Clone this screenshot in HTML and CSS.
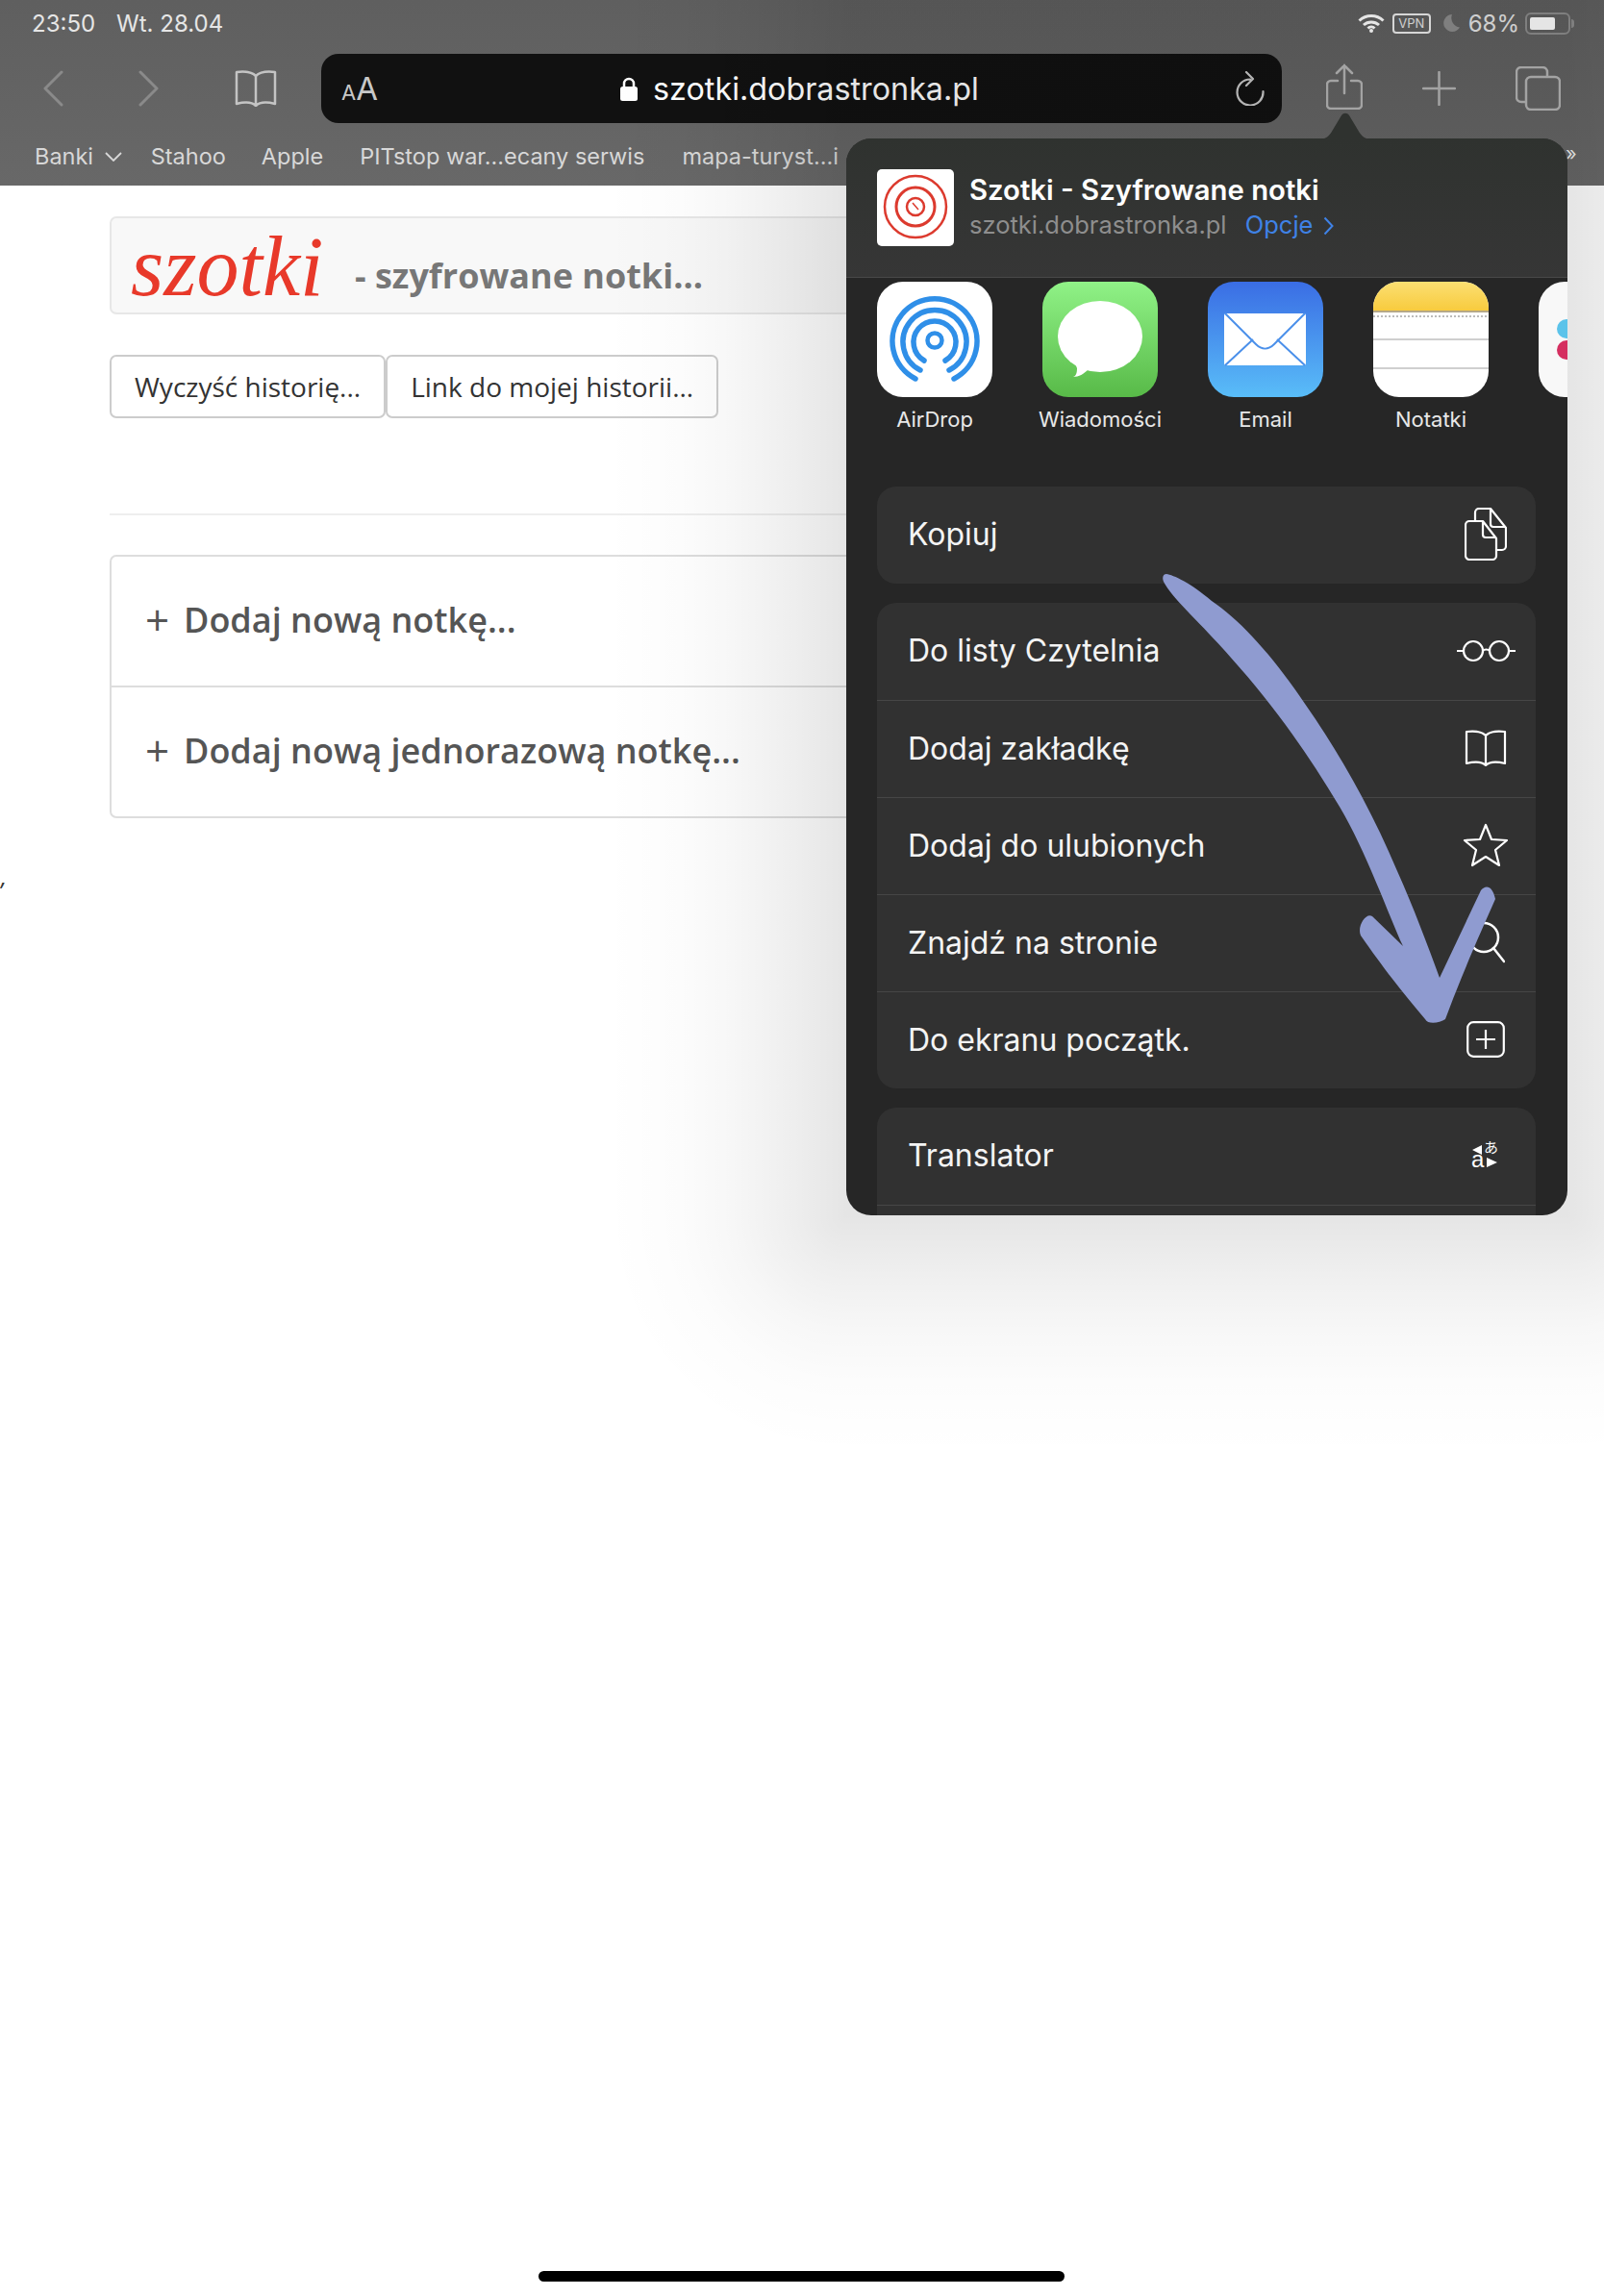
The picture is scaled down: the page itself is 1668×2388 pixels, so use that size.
FILE: index.html
```html
<!DOCTYPE html>
<html lang="pl">
<head>
   <meta charset="UTF-8">
   <meta name="viewport" content="width=device-width, initial-scale=1.0">
   <title>Szotki - Szyfrowane notki</title>
   <link rel="stylesheet" href="styles.css">
</head>
<body>
   <!-- Safari top bar, dimmed behind the share sheet -->
   <header class="topbar">
       <div class="status">
           <span class="status-time">23:50</span>
           <span class="status-date">Wt. 28.04</span>
           <span class="status-right">
               <svg class="wifi" viewBox="0 0 28 20"><path d="M1.5 7.5A18 18 0 0 1 26.500 7.500M6 12a12 12 0 0 1 16 0M10.500 15.500a5 5 0 0 1 7 0" fill="none" stroke="#fff" stroke-width="3"/><circle cx="14" cy="18" r="2" fill="#fff"/></svg>
               <span class="vpn">VPN</span>
               <svg class="moon" viewBox="0 0 20 18"><path d="M12 0A9 9 0 1 0 20 13.500 10 10 0 0 1 12 0Z" fill="#8d8d8d"/></svg>
               <span class="percent">68%</span>
               <span class="battery"><span class="battery-fill"></span></span>
               <span class="battery-nub"></span>
           </span>
       </div>

       <div class="toolbar">
           <svg class="tool back" viewBox="0 0 22 38"><path d="M20 2 3 19l17 17" fill="none" stroke="#8a8a8a" stroke-width="3" stroke-linecap="round" stroke-linejoin="round"/></svg>
           <svg class="tool forward" viewBox="0 0 22 38"><path d="M2 2l17 17L2 36" fill="none" stroke="#8a8a8a" stroke-width="3" stroke-linecap="round" stroke-linejoin="round"/></svg>
           <svg class="tool book" viewBox="0 0 44 38"><path d="M22 6C18 2 10 1 2 2V35C10 33 18 33 22 37 26 33 34 33 42 35V2C34 1 26 2 22 6ZM22 6V37" fill="none" stroke="#c4c4c4" stroke-width="2.500" stroke-linejoin="round"/></svg>
           <div class="urlbar">
               <span class="aa"><small>A</small>A</span>
               <span class="url">
                   <svg class="lock" viewBox="0 0 18 25"><path d="M4 11V7a5 5 0 0 1 10 0v4" fill="none" stroke="#fff" stroke-width="2.500"/><rect y="10" width="18" height="15" rx="2.500" fill="#fff"/></svg>
                   szotki.dobrastronka.pl
               </span>
               <svg class="reload" viewBox="0 0 32 36"><path d="M29.500 21A13.500 13.500 0 1 1 16 8.500M12 1l7 7-7 7" fill="none" stroke="#c8c8c8" stroke-width="2.200" stroke-linecap="round" stroke-linejoin="round"/></svg>
           </div>
           <svg class="tool share" viewBox="0 0 38 48"><path d="M12 18H5a4 4 0 0 0-4 4V43a4 4 0 0 0 4 4H33a4 4 0 0 0 4-4V22a4 4 0 0 0-4-4H26M19 31V2M11 10l8-8 8 8" fill="none" stroke="#b5b5b5" stroke-width="2.500" stroke-linecap="round"/></svg>
           <svg class="tool plus" viewBox="0 0 35 36"><path d="M17.500 1V35M1 18H34" fill="none" stroke="#b5b5b5" stroke-width="2.500" stroke-linecap="round"/></svg>
           <svg class="tool tabs" viewBox="0 0 47 46"><rect x="11" y="11" width="35" height="34" rx="5" fill="none" stroke="#b5b5b5" stroke-width="2.500"/><path d="M11 37H6a5 5 0 0 1-5-5V6a5 5 0 0 1 5-5H28a5 5 0 0 1 5 5v5" fill="none" stroke="#b5b5b5" stroke-width="2.500"/></svg>
       </div>

       <nav class="bookmarks">
           <span class="mark banki">Banki <svg viewBox="0 0 18 10"><path d="M1 1l8 8 8-8" fill="none" stroke="#d8d8d8" stroke-width="1.800"/></svg></span>
           <span class="mark stahoo">Stahoo</span>
           <span class="mark apple">Apple</span>
           <span class="mark pitstop">PITstop war...ecany serwis</span>
           <span class="mark">mapa-turyst...i</span>
       </nav>
   </header>

   <!-- The page itself -->
   <main class="page">
       <div class="navbar">
           <span class="logo">szotki</span>
           <span class="brand">- szyfrowane notki...</span>
       </div>
       <div class="btn-row">
           <button class="btn">Wyczyść historię...</button>
           <button class="btn">Link do mojej historii...</button>
       </div>
       <hr class="rule">
       <div class="notes">
           <div class="note"><span class="note-plus">+</span>Dodaj nową notkę...</div>
           <div class="note"><span class="note-plus">+</span>Dodaj nową jednorazową notkę...</div>
       </div>
   </main>
   <p class="stray">,</p>

   <!-- soft shadow the popover throws on the page -->
   <div class="sheet-shade"></div>

   <!-- Share sheet popover -->
   <svg class="pop-tip" viewBox="0 0 60 28"><path d="M0 28C10 28 13 25 17 18L26 3C28 0 32 0 34 3L43 18C47 25 50 28 60 28Z" fill="#2f322f"/></svg>
   <span class="edge-mark">»</span>
   <section class="sheet">
       <div class="sheet-head">
           <svg class="site-icon" viewBox="0 0 80 80">
               <rect width="80" height="80" rx="5" fill="#fff"/>
               <g fill="none" stroke="#dc3a2e">
                   <circle cx="40" cy="39" r="32" stroke-width="2.500"/>
                   <circle cx="40" cy="39" r="20" stroke-width="3"/>
                   <circle cx="40" cy="39" r="9" stroke-width="2.500"/>
                   <path d="M37 35l6 7" stroke-width="1.500"/>
               </g>
           </svg>
           <div class="sheet-title">
               <div class="site-name">Szotki - Szyfrowane notki</div>
               <div class="site-line">szotki.dobrastronka.pl <span class="options">Opcje <svg viewBox="0 0 11 20"><path d="M1.500 1.500 9.500 10l-8 8.500" fill="none" stroke="#3f82e6" stroke-width="2"/></svg></span></div>
           </div>
       </div>

       <div class="apps">
           <div class="app">
               <svg class="app-icon" viewBox="0 0 120 120">
                   <rect width="120" height="120" fill="#fff"/>
                   <g fill="none" stroke="#2f8fe8" stroke-width="5.500" stroke-linecap="round">
                       <path d="M40 101A44 44 0 1 1 80 101"/>
                       <path d="M45 92A33 33 0 1 1 75 92"/>
                       <path d="M49 82A22 22 0 1 1 71 82"/>
                       <circle cx="60" cy="61" r="7.500" stroke-width="4.500"/>
                   </g>
               </svg>
               <span class="app-name">AirDrop</span>
           </div>
           <div class="app">
               <svg class="app-icon" viewBox="0 0 120 120">
                   <defs><linearGradient id="msg" x1="0" y1="0" x2="0" y2="1"><stop offset="0" stop-color="#90f287"/><stop offset="1" stop-color="#58ba48"/></linearGradient></defs>
                   <rect width="120" height="120" fill="url(#msg)"/>
                   <ellipse cx="60" cy="57" rx="44" ry="37" fill="#fff"/>
                   <path d="M32 80 36 90C36 95 35 98 32 99 38 99 43 96 48 91Z" fill="#fff"/>
               </svg>
               <span class="app-name">Wiadomości</span>
           </div>
           <div class="app">
               <svg class="app-icon" viewBox="0 0 120 120">
                   <defs><linearGradient id="mail" x1="0" y1="0" x2="0" y2="1"><stop offset="0" stop-color="#3a6de4"/><stop offset="1" stop-color="#59bdf8"/></linearGradient></defs>
                   <rect width="120" height="120" fill="url(#mail)"/>
                   <rect x="17" y="33" width="85" height="54" rx="2" fill="#fff"/>
                   <path d="M18 33 50 65C56 71 63 71 69 65L101 33M18 87 47 60M101 87 72 60" fill="none" stroke="#4b90ea" stroke-width="2"/>
               </svg>
               <span class="app-name">Email</span>
           </div>
           <div class="app">
               <svg class="app-icon" viewBox="0 0 120 120">
                   <defs><linearGradient id="note" x1="0" y1="0" x2="0" y2="1"><stop offset="0" stop-color="#fbdf72"/><stop offset="1" stop-color="#f8cb3e"/></linearGradient></defs>
                   <rect width="120" height="120" fill="#fff"/>
                   <rect width="120" height="30" fill="url(#note)"/>
                   <rect y="30" width="120" height="2" fill="#b5a888"/>
                   <path d="M0 36H120" stroke="#bbb" stroke-width="2" stroke-dasharray="2 2"/>
                   <path d="M0 60H120M0 90H120" stroke="#cfcfcf" stroke-width="2"/>
               </svg>
               <span class="app-name">Notatki</span>
           </div>
           <div class="app">
               <svg class="app-icon" viewBox="0 0 120 120">
                   <rect width="120" height="120" fill="#f8f8f8"/>
                   <circle cx="29" cy="49" r="10" fill="#5bc3ea"/>
                   <circle cx="29" cy="71" r="10" fill="#d52f60"/>
               </svg>
           </div>
       </div>

       <div class="card kopiuj">
           <div class="row">
               <span>Kopiuj</span>
               <span class="row-icon">
                   <svg class="ic-copy" viewBox="0 0 44 55"><path d="M11 13V5a4 4 0 0 1 4-4H27L43 21V40a4 4 0 0 1-4 4H33M27 1V17a3 3 0 0 0 3 3H43M5 14H19L33 32V50a4 4 0 0 1-4 4H5a4 4 0 0 1-4-4V18a4 4 0 0 1 4-4ZM19 14V28a3 3 0 0 0 3 3H33" fill="none" stroke="#fff" stroke-width="2.200" stroke-linejoin="round"/></svg>
               </span>
           </div>
       </div>

       <div class="card">
           <div class="row">
               <span>Do listy Czytelnia</span>
               <span class="row-icon">
                   <svg class="ic-glasses" viewBox="0 0 61 24"><circle cx="17" cy="12" r="10" fill="none" stroke="#fff" stroke-width="2.200"/><circle cx="44" cy="12" r="10" fill="none" stroke="#fff" stroke-width="2.200"/><path d="M0 12H7M27 12C28 10 33 10 34 12M54 12H61" fill="none" stroke="#fff" stroke-width="2.200"/></svg>
               </span>
           </div>
           <div class="row">
               <span>Dodaj zakładkę</span>
               <span class="row-icon">
                   <svg class="ic-book" viewBox="0 0 44 38"><path d="M22 6C18 2 10 1 2 2V35C10 33 18 33 22 37 26 33 34 33 42 35V2C34 1 26 2 22 6ZM22 6V37" fill="none" stroke="#fff" stroke-width="2.200" stroke-linejoin="round"/></svg>
               </span>
           </div>
           <div class="row">
               <span>Dodaj do ulubionych</span>
               <span class="row-icon">
                   <svg class="ic-star" viewBox="0 0 48 46"><path d="M24 2 30 17 46 18 34 28 38 44 24 35 10 44 14 28 2 18 18 17Z" fill="none" stroke="#fff" stroke-width="2.200" stroke-linejoin="round"/></svg>
               </span>
           </div>
           <div class="row">
               <span>Znajdź na stronie</span>
               <span class="row-icon">
                   <svg class="ic-search" viewBox="0 0 40 44"><circle cx="18" cy="17" r="15" fill="none" stroke="#fff" stroke-width="2.500"/><path d="M28 28 39 42" fill="none" stroke="#fff" stroke-width="2.500" stroke-linecap="round"/></svg>
               </span>
           </div>
           <div class="row">
               <span>Do ekranu początk.</span>
               <span class="row-icon">
                   <svg class="ic-add" viewBox="0 0 40 38"><rect x="1.200" y="1.200" width="37.600" height="35.600" rx="6" fill="none" stroke="#fff" stroke-width="2.200"/><path d="M20 9V29M10 19H30" fill="none" stroke="#fff" stroke-width="2.200"/></svg>
               </span>
           </div>
       </div>

       <div class="card last">
           <div class="row">
               <span>Translator</span>
               <span class="row-icon">
                   <svg class="ic-translate" viewBox="-6 -10 42 54">
                       <text x="0" y="29" class="tr-latin">a</text>
                       <text x="13" y="14" class="tr-kana">あ</text>
                       <path d="M1 11 11 6V16ZM27 24 16 29V19Z" fill="#fff"/>
                   </svg>
               </span>
           </div>
           <div class="row"></div>
       </div>

       <!-- hand drawn arrow on top of the sheet -->
       <svg class="arrow" viewBox="0 0 750 1120"><path d="M333 453C340 454 358 462 380 481 410 501 445 540 477 588 510 635 545 695 573 762 590 800 605 840 617 873L660 782C665 776 672 777 675 791 660 825 640 870 623 916 617 920 605 922 602 916 580 890 560 865 535 829 531 820 540 805 547 809L579 840C565 810 540 740 513 695 480 640 445 590 400 540 370 505 340 480 330 461 328 456 330 453 333 453Z" fill="#8f9bd0"/></svg>
   </section>

   <div class="home-bar"></div>
</body>
</html>
```

FILE: styles.css
```css
/* whole page */
body {
    margin: 0;
    height: 2388px;
    overflow: hidden;
    position: relative;
    background-color: #fff;
    font-family: 'Inter', 'Liberation Sans', sans-serif;
}

/* dimmed browser bar */
.topbar {
    height: 193px;
    background: linear-gradient(#5f5f5f, #686868);
    color: #e6e6e6;
}

.status {
    display: flex;
    align-items: center;
    height: 48px;
    padding-left: 33px;
    font-size: 24px;
}

.status-date {
    margin-left: 22px;
}

.status-right {
    display: flex;
    align-items: center;
    margin-left: auto;
    padding-right: 31px;
}

.wifi {
    width: 28px;
    height: 20px;
}

.vpn {
    width: 36px;
    height: 17px;
    margin-left: 8px;
    border: 2px solid #eee;
    border-radius: 4px;
    font-size: 13px;
    line-height: 17px;
    text-align: center;
}

.moon {
    width: 20px;
    height: 18px;
    margin-left: 10px;
}

.percent {
    margin-left: 9px;
    font-size: 24px;
}

.battery {
    display: block;
    box-sizing: border-box;
    width: 47px;
    height: 23px;
    margin-left: 6px;
    padding: 3px;
    border: 2px solid #8d8d8d;
    border-radius: 6px;
}

.battery-fill {
    display: block;
    width: 26px;
    height: 13px;
    border-radius: 2px;
    background-color: #fff;
}

.battery-nub {
    width: 3px;
    height: 9px;
    margin-left: 1px;
    border-radius: 0 3px 3px 0;
    background-color: #8d8d8d;
}

/* back, forward, address bar, share */
.toolbar {
    display: flex;
    align-items: center;
    height: 72px;
    margin-top: 8px;
    padding-left: 44px;
}

.tool {
    flex: none;
}

.back, .forward {
    width: 22px;
    height: 38px;
}

.forward {
    margin-left: 78px;
}

.book {
    width: 44px;
    height: 38px;
    margin-left: 78px;
}

.urlbar {
    display: grid;
    grid-template-columns: 1fr auto 1fr;
    align-items: center;
    flex: none;
    box-sizing: border-box;
    width: 999px;
    height: 72px;
    margin-left: 46px;
    padding: 0 25px 0 21px;
    border-radius: 18px;
    background-color: #111;
    color: #fff;
}

.aa {
    color: #c8c8c8;
    font-size: 33px;
}

.aa small {
    font-size: 22px;
}

.url {
    display: flex;
    align-items: center;
    font-size: 32.300px;
    white-space: nowrap;
}

.lock {
    width: 18px;
    height: 25px;
    margin-right: 16px;
}

.reload {
    justify-self: end;
    width: 32px;
    height: 36px;
    margin-right: -8px;
}

.share {
    width: 38px;
    height: 48px;
    margin-left: 46px;
    margin-top: -4px;
}

.plus {
    width: 35px;
    height: 36px;
    margin-left: 62px;
}

.tabs {
    width: 47px;
    height: 46px;
    margin-left: 62px;
}

.bookmarks {
    display: flex;
    align-items: center;
    height: 50px;
    margin-top: 9px;
    padding-left: 36px;
    color: #d8d8d8;
    font-size: 23.500px;
    white-space: nowrap;
}

.mark {
    margin-right: 38px;
}

.banki {
    margin-right: 30px;
}

.banki svg {
    width: 18px;
    height: 10px;
    margin-left: 5px;
    vertical-align: 3px;
}

.stahoo {
    margin-right: 37px;
}

.pitstop {
    margin-right: 39px;
}

/* page under the sheet */
.page {
    width: 1440px;
    margin-left: 114px;
    padding-top: 32px;
    font-family: 'Open Sans', 'Liberation Sans', sans-serif;
}

.navbar {
    display: flex;
    align-items: center;
    box-sizing: border-box;
    height: 102px;
    padding-left: 20px;
    border: 2px solid #e7e7e7;
    border-radius: 7px;
    background-color: #f8f8f8;
}

.logo {
    width: 233px;
    margin-top: 4px;
    color: #e8392a;
    font-family: 'Liberation Serif', serif;
    font-size: 88px;
    font-style: italic;
    line-height: 90px;
}

.brand {
    margin-top: 20px;
    color: #777;
    font-size: 36px;
    font-weight: 700;
}

.btn-row {
    display: flex;
    margin-top: 42px;
}

.btn {
    box-sizing: border-box;
    height: 66px;
    padding: 0 24px;
    border: 2px solid #ccc;
    border-radius: 7px;
    background-color: #fff;
    color: #333;
    font-family: 'Open Sans', 'Liberation Sans', sans-serif;
    font-size: 28px;
}

.rule {
    height: 2px;
    margin: 99px 0 0;
    border: none;
    background-color: #eee;
}

.notes {
    box-sizing: border-box;
    margin-top: 41px;
    border: 2px solid #ddd;
    border-radius: 7px;
}

.note {
    display: flex;
    align-items: center;
    box-sizing: border-box;
    height: 134px;
    padding: 0 0 4px 35px;
    color: #555;
    font-size: 36px;
    font-weight: 600;
}

.note-plus {
    width: 40px;
    font-size: 44px;
    font-weight: 400;
}

.note + .note {
    border-top: 2px solid #ddd;
    height: 136px;
}

.stray {
    position: absolute;
    top: 895px;
    left: 1px;
    margin: 0;
    color: #333;
    font-family: 'Open Sans', sans-serif;
    font-size: 24px;
    font-style: italic;
}

/* popover shadow: strips along the left, bottom and right edge, two corners, and the area under the sheet */
.sheet-shade {
    --fall: rgba(0, 0, 0, 0.1), rgba(0, 0, 0, 0.068) 22%, rgba(0, 0, 0, 0.032) 48%, rgba(0, 0, 0, 0.012) 70%, rgba(0, 0, 0, 0);
    position: absolute;
    top: 0;
    left: 0;
    width: 1668px;
    height: 1514px;
    pointer-events: none;
    background:
        linear-gradient(to left, var(--fall)) 630px 0 / 250px 1264px no-repeat,
        radial-gradient(circle 250px at 100% 0, var(--fall)) 630px 1264px / 250px 250px no-repeat,
        linear-gradient(to bottom, var(--fall)) 880px 1264px / 750px 250px no-repeat,
        radial-gradient(circle 250px at 0 0, var(--fall)) 1630px 1264px / 38px 250px no-repeat,
        linear-gradient(rgba(0, 0, 0, 0.1), rgba(0, 0, 0, 0.1)) 880px 0 / 750px 1264px no-repeat,
        linear-gradient(to right, rgba(0, 0, 0, 0.1), rgba(0, 0, 0, 0.08)) 1630px 0 / 38px 1264px no-repeat;
}

/* share sheet */
.pop-tip {
    position: absolute;
    top: 117px;
    left: 1369px;
    width: 60px;
    height: 28px;
}

.edge-mark {
    position: absolute;
    top: 148px;
    left: 1628px;
    color: #d8d8d8;
    font-size: 20px;
}

.sheet {
    position: absolute;
    top: 144px;
    left: 880px;
    width: 750px;
    height: 1120px;
    overflow: hidden;
    border-radius: 26px;
    background-color: #262626;
    color: #f4f4f4;
}

.sheet-head {
    display: flex;
    align-items: center;
    box-sizing: border-box;
    height: 145px;
    padding: 0 0 3px 32px;
    border-bottom: 1px solid #484848;
    background: linear-gradient(#2f322f, #363636);
}

.site-icon {
    width: 80px;
    height: 80px;
    margin-top: 3px;
}

.sheet-title {
    margin-left: 16px;
}

.site-name {
    color: #fff;
    font-size: 29.300px;
    font-weight: 600;
}

.site-line {
    margin-top: 3px;
    color: #8e8e8e;
    font-size: 25.500px;
    white-space: nowrap;
}

.options {
    margin-left: 12px;
    color: #3f82e6;
}

.options svg {
    width: 11px;
    height: 20px;
    margin-left: 3px;
    vertical-align: -2px;
}

.apps {
    display: flex;
    gap: 52px;
    padding: 4px 0 0 32px;
    height: 213px;
    box-sizing: border-box;
}

.app {
    display: flex;
    flex: none;
    flex-direction: column;
    align-items: center;
    width: 120px;
}

.app-icon {
    width: 120px;
    height: 120px;
    border-radius: 27px;
}

.app-name {
    margin-top: 10px;
    color: #e8e8e8;
    font-size: 22px;
    white-space: nowrap;
}

.card {
    margin: 20px 33px 0 32px;
    border-radius: 20px;
    background-color: #313131;
}

.kopiuj {
    margin-top: 4px;
}

.row {
    display: flex;
    align-items: center;
    justify-content: space-between;
    box-sizing: border-box;
    height: 101px;
    padding: 0 0 2px 32px;
    font-size: 32px;
}

.row + .row {
    border-top: 1px solid #464646;
}

.row-icon {
    display: flex;
    align-items: center;
    justify-content: center;
    width: 104px;
    color: #fff;
}

.ic-copy {
    width: 44px;
    height: 55px;
}

.ic-glasses {
    width: 61px;
    height: 24px;
}

.ic-book {
    width: 44px;
    height: 38px;
}

.ic-star {
    width: 48px;
    height: 46px;
}

.ic-search {
    width: 40px;
    height: 44px;
}

.ic-add {
    width: 40px;
    height: 38px;
}

.ic-translate {
    width: 42px;
    height: 54px;
}

.tr-latin {
    fill: #fff;
    font-family: 'Liberation Sans', sans-serif;
    font-size: 24px;
}

.tr-kana {
    fill: #fff;
    font-family: 'Noto Sans CJK JP', sans-serif;
    font-size: 15px;
}

/* drawn over the sheet, so it is placed by hand */
.arrow {
    position: absolute;
    top: 0;
    left: 0;
    width: 750px;
    height: 1120px;
    pointer-events: none;
}

.home-bar {
    position: absolute;
    top: 2362px;
    left: 560px;
    width: 547px;
    height: 11px;
    border-radius: 6px;
    background-color: #000;
}
```
